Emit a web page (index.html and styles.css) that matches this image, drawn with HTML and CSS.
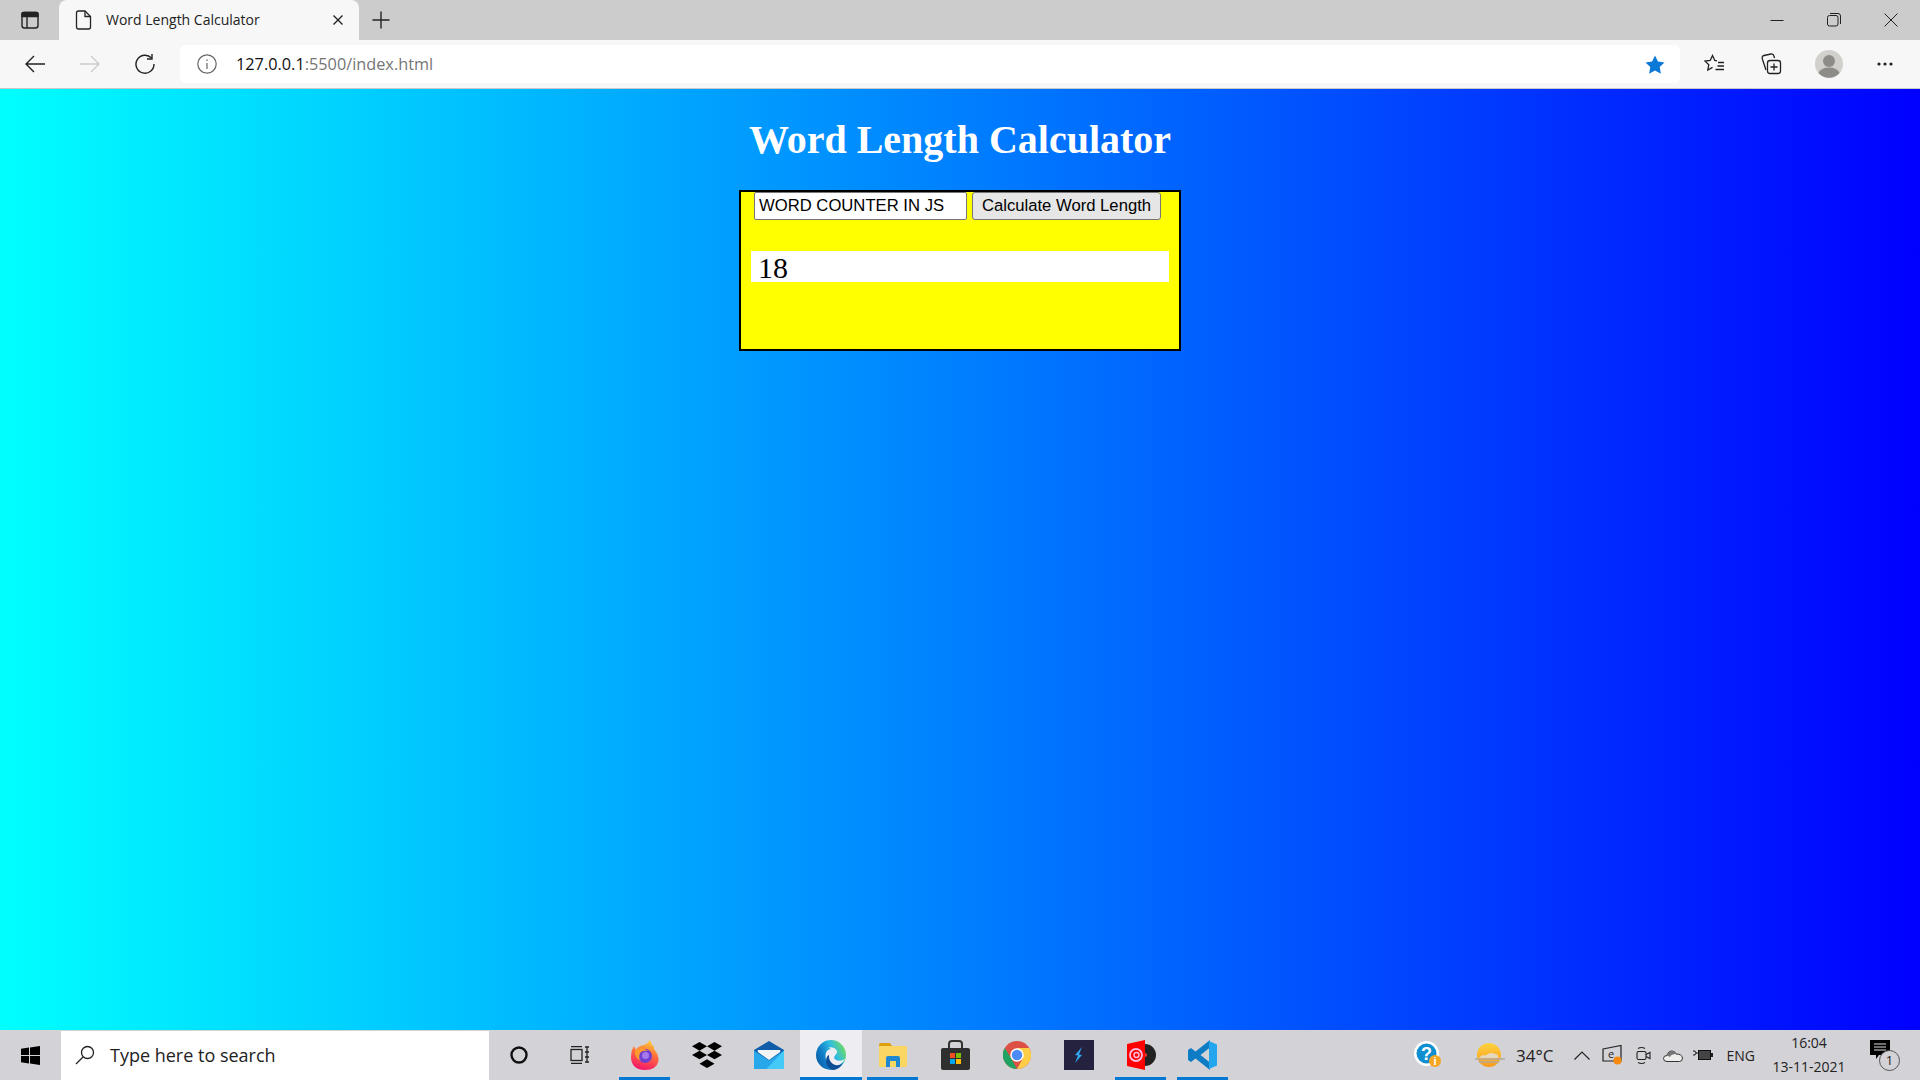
FILE: index.html
```html
<!DOCTYPE html>
<html lang="en">
<head>
    <meta charset="UTF-8">
    <meta name="viewport" content="width=device-width, initial-scale=1.0">
    <title>Word Length Calculator</title>
    <link rel="stylesheet" href="styles.css">
</head>
<body>
    <!-- browser tab strip -->
    <div class="tabstrip">
        <svg class="tab-actions" width="20" height="20" viewBox="0 0 20 20" fill="none" stroke="#222" stroke-width="1.4">
            <rect x="2" y="2.500" width="16" height="15.500" rx="2.500"/>
            <path d="M2 3.500q0-1 1-1h14q1 0 1 1v3H2z" fill="#222"/>
            <path d="M7 6.500V18"/>
        </svg>
        <div class="tab">
            <svg width="18" height="22" viewBox="0 0 18 22" fill="none" stroke="#222" stroke-width="1.3">
                <path d="M3.500 2h6.500l5.500 5.500V18q0 2-2 2h-10q-2 0-2-2V4q0-2 2-2z"/>
                <path d="M10 2v5.500h5.500"/>
            </svg>
            <span class="tab-title">Word Length Calculator</span>
            <svg width="12" height="12" viewBox="0 0 12 12" stroke="#222" stroke-width="1.4"><path d="M1.500 1.500l9 9M10.500 1.500l-9 9"/></svg>
        </div>
        <svg class="new-tab" width="18" height="18" viewBox="0 0 18 18" stroke="#222" stroke-width="1.4"><path d="M9 0.500v17M0.500 9h17"/></svg>
        <div class="window-buttons">
            <svg width="14" height="14" viewBox="0 0 14 14" stroke="#222" stroke-width="1"><path d="M0.500 7.500h13"/></svg>
            <svg width="14" height="14" viewBox="0 0 14 14" fill="none" stroke="#222" stroke-width="1">
                <rect x="0.500" y="2.500" width="10.500" height="10.500" rx="2"/>
                <path d="M3 0.500h8q2.500 0 2.500 2.500v8"/>
            </svg>
            <svg width="14" height="14" viewBox="0 0 14 14" stroke="#222" stroke-width="1"><path d="M0.500 0.500l13 13M13.500 0.500l-13 13"/></svg>
        </div>
    </div>

    <!-- address bar -->
    <div class="toolbar">
        <svg class="nav-back" width="20" height="18" viewBox="0 0 20 18" fill="none" stroke="#222" stroke-width="1.4"><path d="M20 9H1M9 1L1 9l8 8"/></svg>
        <svg class="nav-forward" width="20" height="18" viewBox="0 0 20 18" fill="none" stroke="#ccc" stroke-width="1.4"><path d="M0 9h19M11 1l8 8-8 8"/></svg>
        <svg class="nav-reload" width="20" height="20" viewBox="0 0 20 20" fill="none" stroke="#222" stroke-width="1.4"><path d="M16.500 4A9 9 0 1 0 19 10"/><path d="M17 0v5h-5"/></svg>
        <div class="addressbar">
            <svg width="20" height="20" viewBox="0 0 20 20" fill="none" stroke="#666" stroke-width="1.2">
                <circle cx="10" cy="10" r="9.200"/>
                <path d="M10 9v6M10 5.500v1.500"/>
            </svg>
            <span class="url"><span class="url-host">127.0.0.1</span>:5500/index.html</span>
            <svg width="20" height="19" viewBox="0 0 22 21" fill="#0a78d7"><path d="M11 0.500l3.200 6.700 7.300 1-5.300 5.100 1.300 7.300L11 17.100l-6.500 3.500 1.300-7.300L0.500 8.200l7.300-1z"/></svg>
        </div>
        <div class="toolbar-icons">
            <svg width="22" height="20" viewBox="0 0 22 20" fill="none" stroke="#222" stroke-width="1.3">
                <path d="M13 6.800L10.800 6.500 8.500 1.500 6.200 6.500 1 7.100l3.800 3.600-1 5.300 4.700-2.600"/>
                <path d="M14 8.500h6M13.500 12h6.500M11.500 15.500h8.500"/>
            </svg>
            <svg width="22" height="22" viewBox="0 0 22 22" fill="none" stroke="#222" stroke-width="1.3">
                <path d="M6 17L2.500 6.500Q1.500 3 4 2.500L11 1q2.500-.3 3 2l.5 2"/>
                <rect x="7.500" y="7.500" width="13" height="13" rx="2.500"/>
                <path d="M14 10.500v7M10.500 14h7"/>
            </svg>
            <svg width="28" height="28" viewBox="0 0 28 28">
                <circle cx="14" cy="14" r="14" fill="#d2d0cd"/>
                <circle cx="14" cy="11" r="6" fill="#8e8c89"/>
                <path d="M3.500 23Q6 17.500 14 17.500T24.500 23A14 14 0 0 1 3.500 23z" fill="#8e8c89"/>
            </svg>
            <svg width="16" height="4" viewBox="0 0 16 4" fill="#222"><circle cx="2" cy="2" r="1.600"/><circle cx="8" cy="2" r="1.600"/><circle cx="14" cy="2" r="1.600"/></svg>
        </div>
    </div>

    <!-- the page itself -->
    <main class="page">
        <h1>Word Length Calculator</h1>
        <div class="calculator">
            <div class="calc-row">
                <input type="text" class="word-input" value="WORD COUNTER IN JS">
                <button class="calc-button">Calculate Word Length</button>
            </div>
            <div class="result">18</div>
        </div>
    </main>

    <!-- windows taskbar -->
    <footer class="taskbar">
        <svg class="start" width="19" height="19" viewBox="0 0 19 19" fill="#000">
            <path d="M0 2.700l8-1.100v7.400H0zM9 1.400L19 0v9H9zM0 10h8v7.400l-8-1.100zM9 10h10v9L9 17.600z"/>
        </svg>
        <div class="searchbox">
            <svg width="20" height="20" viewBox="0 0 20 20" fill="none" stroke="#222" stroke-width="1.3"><circle cx="12.500" cy="7.500" r="6"/><path d="M8 12L1 19"/></svg>
            <span>Type here to search</span>
        </div>
        <svg class="cortana" width="18" height="18" viewBox="0 0 18 18" fill="none" stroke="#111" stroke-width="2.400"><circle cx="9" cy="9" r="7.500"/></svg>
        <svg class="taskview" width="20" height="18" viewBox="0 0 20 18" fill="none" stroke="#222" stroke-width="1.300">
            <rect x="1" y="3.500" width="11" height="11"/>
            <path d="M1 0.500h11M1 17.500h11M15 1h4M15 6h4M15 11h4M15 16h4M17 1v15"/>
        </svg>
        <div class="apps">
            <div class="app running">
                <svg width="30" height="30" viewBox="0 0 30 30">
                    <defs>
                        <linearGradient id="fox" x1="0.700" y1="0" x2="0.400" y2="1">
                            <stop offset="0" stop-color="#ffd23a"/>
                            <stop offset="0.450" stop-color="#ff7139"/>
                            <stop offset="1" stop-color="#f5156c"/>
                        </linearGradient>
                    </defs>
                    <path d="M20 0q1 4 4 7l0 2q5 6 4.500 12-2 9-13.500 9Q2 30 1 18 1 10 4 6q.5 2 2 3.500 3-4 8-4.500 4-1.500 6-5z" fill="url(#fox)"/>
                    <circle cx="15" cy="16" r="7" fill="#6f3fd0"/>
                    <circle cx="15.500" cy="15.500" r="3.500" fill="#a678ee"/>
                    <path d="M5 10q7-4 13 1-6-1-8 2-2 5 1 8-7-3-6-11z" fill="#ff9a2e"/>
                </svg>
            </div>
            <div class="app">
                <svg width="30" height="26" viewBox="0 0 24 24" preserveAspectRatio="none" fill="#000"><path d="M6 0l6 4-6 4-6-4zM18 0l6 4-6 4-6-4zM6 8l6 4-6 4-6-4zM18 8l6 4-6 4-6-4zM12 16l6 4-6 4-6-4z"/></svg>
            </div>
            <div class="app">
                <svg width="30" height="28" viewBox="0 0 24 28" preserveAspectRatio="none">
                    <path d="M12 0l12 9v19H0V9z" fill="#0f5ca8"/>
                    <path d="M3 9h18v2l-9 8-9-8z" fill="#f2f4f6"/>
                    <path d="M0 9.500l12 10 12-10V28H0z" fill="#28a8ea"/>
                    <path d="M24 9.500V28H10z" fill="#50d9ff" opacity=".7"/>
                </svg>
            </div>
            <div class="app active running">
                <svg width="30" height="30" viewBox="0 0 30 30">
                    <defs>
                        <linearGradient id="edge" x1="1" y1="0.300" x2="0" y2="0.800">
                            <stop offset="0" stop-color="#6fdc5f"/>
                            <stop offset="0.350" stop-color="#30bde0"/>
                            <stop offset="0.700" stop-color="#0f7cc8"/>
                            <stop offset="1" stop-color="#0b5aa2"/>
                        </linearGradient>
                    </defs>
                    <circle cx="15" cy="15" r="15" fill="url(#edge)"/>
                    <path d="M29.500 19Q24 22 20 20q-3-2-1-4.500 3-3 1.500-5.500Q17 5 9 9q4-2 6 0-5 .5-5.500 6-.5 7 6 11 6 3 14-7z" fill="#eeeef2"/>
                    <path d="M13 15q-.5 6 4 9 5 3 10-1-4 7-10 7-6-2-7-8 0-6 3-7z" fill="#0c4f96"/>
                </svg>
            </div>
            <div class="app running">
                <svg width="28" height="24" viewBox="0 0 28 24">
                    <path d="M0 2q0-2 2-2h9l2 3H0z" fill="#dd9f0b"/>
                    <rect y="3" width="28" height="21" rx="1" fill="#fcd663"/>
                    <path d="M7 24v-9q0-2 2-2h10q2 0 2 2v9h-4v-6h-6v6z" fill="#1e88d0"/>
                </svg>
            </div>
            <div class="app">
                <svg width="29" height="30" viewBox="0 0 29 30">
                    <path d="M8 10V4q0-3 3-3h7q3 0 3 3v6" fill="none" stroke="#333" stroke-width="2"/>
                    <rect y="8" width="29" height="22" rx="2" fill="#2f2f2f"/>
                    <rect x="9" y="13" width="5" height="5" fill="#f25022"/>
                    <rect x="15" y="13" width="5" height="5" fill="#7fba00"/>
                    <rect x="9" y="19" width="5" height="5" fill="#00a4ef"/>
                    <rect x="15" y="19" width="5" height="5" fill="#ffb900"/>
                </svg>
            </div>
            <div class="app">
                <svg width="28" height="28" viewBox="0 0 24 24">
                    <circle cx="12" cy="12" r="12" fill="#dd5044"/>
                    <path d="M12 24A12 12 0 0 1 1.600 6L7 15z" fill="#1da462"/>
                    <path d="M22.400 6A12 12 0 0 1 12 24l5-9-5-9z" fill="#ffcd46"/>
                    <circle cx="12" cy="12" r="5.800" fill="#fff"/>
                    <circle cx="12" cy="12" r="4.500" fill="#4c8bf5"/>
                </svg>
            </div>
            <div class="app">
                <svg width="30" height="30" viewBox="0 0 30 30">
                    <rect width="30" height="30" fill="#24223f"/>
                    <path d="M18 7l-7 8 3 .5-3 7.500 7-8-3-.5z" fill="#2fa8f0"/>
                </svg>
            </div>
            <div class="app running">
                <svg width="29" height="30" viewBox="0 0 29 30">
                    <circle cx="18" cy="15" r="11" fill="#222"/>
                    <circle cx="18" cy="15" r="2" fill="#e33"/>
                    <path d="M0 4l18-4v30L0 26z" fill="#f00"/>
                    <circle cx="9" cy="15" r="6" fill="none" stroke="#fbd" stroke-width="1.800"/>
                    <circle cx="9.500" cy="15" r="2.500" fill="none" stroke="#fbd" stroke-width="1.400"/>
                </svg>
            </div>
            <div class="app running">
                <svg width="30" height="30" viewBox="0 0 30 30">
                    <path d="M22 0v7.500L12.500 15l9.500 7.500V30L7.500 18.500 3 22l-3-2v-10l3-2 4.500 3.500z" fill="#0e7cc4"/>
                    <path d="M21 1l8 3.500v21L21 29z" fill="#23a6ee"/>
                </svg>
            </div>
        </div>
        <div class="tray">
            <svg width="29" height="28" viewBox="0 0 29 28">
                <circle cx="12.500" cy="12.500" r="12.500" fill="#fff"/>
                <circle cx="12.500" cy="12.500" r="10" fill="#0f8fd0"/>
                <text x="12.500" y="19" text-anchor="middle" class="help-mark">?</text>
                <circle cx="21" cy="20" r="6" fill="#f5a623"/>
                <text x="21" y="24" text-anchor="middle" class="help-info">i</text>
            </svg>
            <svg class="weather-icon" width="30" height="24" viewBox="0 0 30 24">
                <defs>
                    <linearGradient id="sun" x1="0" y1="0" x2="0" y2="1">
                        <stop offset="0" stop-color="#fdd23e"/>
                        <stop offset="1" stop-color="#f99a1c"/>
                    </linearGradient>
                </defs>
                <circle cx="14" cy="12" r="12" fill="url(#sun)"/>
                <path d="M4 15q3-4 7-2.500 4-4 9-1.500 3 0 3.500 4z" fill="#e6d8bd"/>
                <path d="M0 16h30M4 19h20" stroke="#b3aba0" stroke-width="1.500"/>
            </svg>
            <span class="temp">34°C</span>
            <svg class="tray-chevron" width="16" height="9" viewBox="0 0 16 9" fill="none" stroke="#222" stroke-width="1.200"><path d="M0.500 8.500L8 1l7.500 7.500"/></svg>
            <svg class="tray-meet" width="20" height="20" viewBox="0 0 20 20" fill="none" stroke="#222" stroke-width="1.200">
                <path d="M1 4l18-3.500V16H1z"/>
                <text x="9" y="13" text-anchor="middle" class="tray-e">e</text>
                <circle cx="15.500" cy="15.500" r="4" fill="#f7890e" stroke="none"/>
            </svg>
            <svg class="tray-cam" width="15" height="19" viewBox="0 0 15 19" fill="none" stroke="#222" stroke-width="1.100">
                <rect x="1" y="5.500" width="9" height="8" rx="1.500"/>
                <path d="M10 8.500l4-2v6l-4-2M2 2.500q3.500-2 7 0M2 16.500q3.500 2 7 0"/>
            </svg>
            <svg class="tray-cloud" width="20" height="13" viewBox="0 0 20 13">
                <path d="M4 12.500Q0.500 12.500 0.500 9.500 0.500 6.500 4 6.500 5 2 9 2q3 0 4 3 6 0 6.500 4 0 3.500-3 3.500z" fill="#eee" stroke="#333"/>
                <path d="M4 6.500Q5 2 9 2q3 0 4 3-5 0-6 3z" fill="#777"/>
            </svg>
            <svg class="tray-battery" width="20" height="12" viewBox="0 0 20 12">
                <path d="M0 2h2v1h1v2h-1v1h-2M3 4h2" fill="none" stroke="#222"/>
                <rect x="5.500" y="1.500" width="12" height="9" fill="#444" stroke="#111"/>
                <rect x="18" y="4" width="2" height="4" fill="#222"/>
            </svg>
            <span class="lang">ENG</span>
            <div class="clock">
                <span>16:04</span>
                <span>13-11-2021</span>
            </div>
            <div class="notify">
                <svg width="20" height="20" viewBox="0 0 20 20">
                    <path d="M0 0h20v15H9l-3 4v-4H0z" fill="#000"/>
                    <path d="M4 4h12M4 7h12M4 10h12" stroke="#ddd" stroke-width="1"/>
                </svg>
                <span class="notify-count">1</span>
            </div>
        </div>
    </footer>
</body>
</html>
```

FILE: styles.css
```css
html, body {
    height: 100%;
}
body {
    margin: 0;
    display: flex;
    flex-direction: column;
    overflow: hidden;
    font-family: "Open Sans", "Noto Sans", sans-serif;
    color: #222;
}
svg {
    flex-shrink: 0;
    display: block;
}

/* tab strip */
.tabstrip {
    height: 40px;
    background-color: #cccccc;
    display: flex;
    align-items: center;
    flex-shrink: 0;
}
.tab-actions {
    margin-left: 20px;
}
.tab {
    width: 300px;
    height: 40px;
    margin-left: 19px;
    padding: 0 15px 0 16px;
    box-sizing: border-box;
    background-color: #f7f7f7;
    border-radius: 8px 8px 0 0;
    display: flex;
    align-items: center;
}
.tab-title {
    flex: 1;
    margin-left: 13px;
    padding-bottom: 1px;
    font-size: 14px;
}
.new-tab {
    margin-left: 13px;
}
.window-buttons {
    margin-left: auto;
    margin-right: 22px;
    display: flex;
    gap: 43px;
}

/* address bar */
.toolbar {
    height: 49px;
    box-sizing: border-box;
    background-color: #f7f7f7;
    border-bottom: 1px solid #c8c8c8;
    display: flex;
    align-items: center;
    flex-shrink: 0;
}
.nav-back {
    margin-left: 25px;
}
.nav-forward {
    margin-left: 35px;
}
.nav-reload {
    margin-left: 35px;
}
.addressbar {
    width: 1500px;
    height: 38px;
    margin-left: 25px;
    box-sizing: border-box;
    padding: 0 15px 0 17px;
    background-color: white;
    border-radius: 6px;
    display: flex;
    align-items: center;
}
.url {
    flex: 1;
    margin-left: 19px;
    font-size: 16.300px;
    color: #767676;
}
.url-host {
    color: #111;
}
.toolbar-icons {
    flex: 1;
    display: flex;
    align-items: center;
    padding: 0 27px 0 24px;
    justify-content: space-between;
}

/* page */
.page {
    flex: 1;
    background: linear-gradient(to right, aqua, blue);
    text-align: center;
    font-family: "Liberation Serif", serif;
}
h1 {
    margin: 0;
    padding-top: 28px;
    color: white;
    font-size: 40px;
    line-height: 46px;
    font-weight: bold;
}
.calculator {
    width: 442px;
    height: 161px;
    margin: 27px auto 0;
    box-sizing: border-box;
    border: 2px solid black;
    background-color: yellow;
}
.calc-row {
    display: flex;
    gap: 5px;
    padding-left: 13px;
}
.word-input {
    width: 213px;
    height: 28px;
    box-sizing: border-box;
    padding: 0 4px;
    border: 1px solid #767676;
    border-radius: 2px;
    font-family: "Liberation Sans", sans-serif;
    font-size: 16.670px;
    color: black;
}
.calc-button {
    width: 189px;
    height: 28px;
    padding: 0;
    border: 1px solid #767676;
    border-radius: 3px;
    background-color: #e6e6e6;
    font-family: "Liberation Sans", sans-serif;
    font-size: 16.670px;
    color: black;
}
.result {
    margin: 31px 10px 0;
    height: 31px;
    padding-left: 7px;
    background-color: white;
    text-align: left;
    font-size: 30px;
    line-height: 33px;
    color: black;
}

/* taskbar */
.taskbar {
    height: 50px;
    background-color: #d3d2d6;
    display: flex;
    align-items: center;
    flex-shrink: 0;
}
.start {
    margin-left: 21px;
}
.searchbox {
    width: 428px;
    height: 49px;
    margin-top: 1px;
    margin-left: 21px;
    padding: 0 0 2px 14px;
    box-sizing: border-box;
    background-color: white;
    display: flex;
    align-items: center;
    gap: 15px;
    font-size: 18px;
}
.cortana {
    margin-left: 21px;
}
.taskview {
    margin-left: 42px;
}
.apps {
    margin-left: 24px;
    display: flex;
}
.app {
    width: 62px;
    height: 50px;
    display: flex;
    align-items: center;
    justify-content: center;
    box-sizing: border-box;
    position: relative;
}
.app.active {
    background-color: #eeeef2;
}
.app.running::after {
    content: "";
    position: absolute;
    left: 5px;
    right: 6px;
    bottom: 0;
    height: 3px;
    background-color: #0078d4;
}
.app.active.running::after {
    left: 0;
    right: 0;
}
.tray {
    margin-left: auto;
    display: flex;
    align-items: center;
    height: 50px;
}
.help-mark {
    font-family: "Liberation Sans", sans-serif;
    font-size: 18px;
    font-weight: bold;
    fill: white;
}
.help-info {
    font-family: "Liberation Sans", sans-serif;
    font-size: 11px;
    font-weight: bold;
    fill: white;
}
.weather-icon {
    margin-left: 32px;
}
.temp {
    margin-left: 11px;
    font-size: 17px;
}
.tray-chevron {
    margin-left: 20px;
}
.tray-meet {
    margin-left: 12px;
}
.tray-e {
    font-size: 11px;
    fill: #222;
    stroke: none;
}
.tray-cam {
    margin-left: 14px;
}
.tray-cloud {
    margin-left: 12px;
}
.tray-battery {
    margin-left: 10px;
}
.lang {
    margin-left: 14px;
    font-size: 14px;
}
.clock {
    margin-left: 16px;
    width: 76px;
    display: flex;
    flex-direction: column;
    align-items: center;
    gap: 6px;
    font-size: 14px;
    line-height: 18px;
}
.notify {
    margin-left: 23px;
    margin-right: 20px;
    width: 30px;
    height: 31px;
    position: relative;
}
.notify-count {
    position: absolute;
    right: 0;
    bottom: 0;
    width: 19px;
    height: 19px;
    border: 1px solid #555;
    border-radius: 50%;
    background-color: #d3d2d6;
    font-size: 13px;
    line-height: 19px;
    text-align: center;
}
```
